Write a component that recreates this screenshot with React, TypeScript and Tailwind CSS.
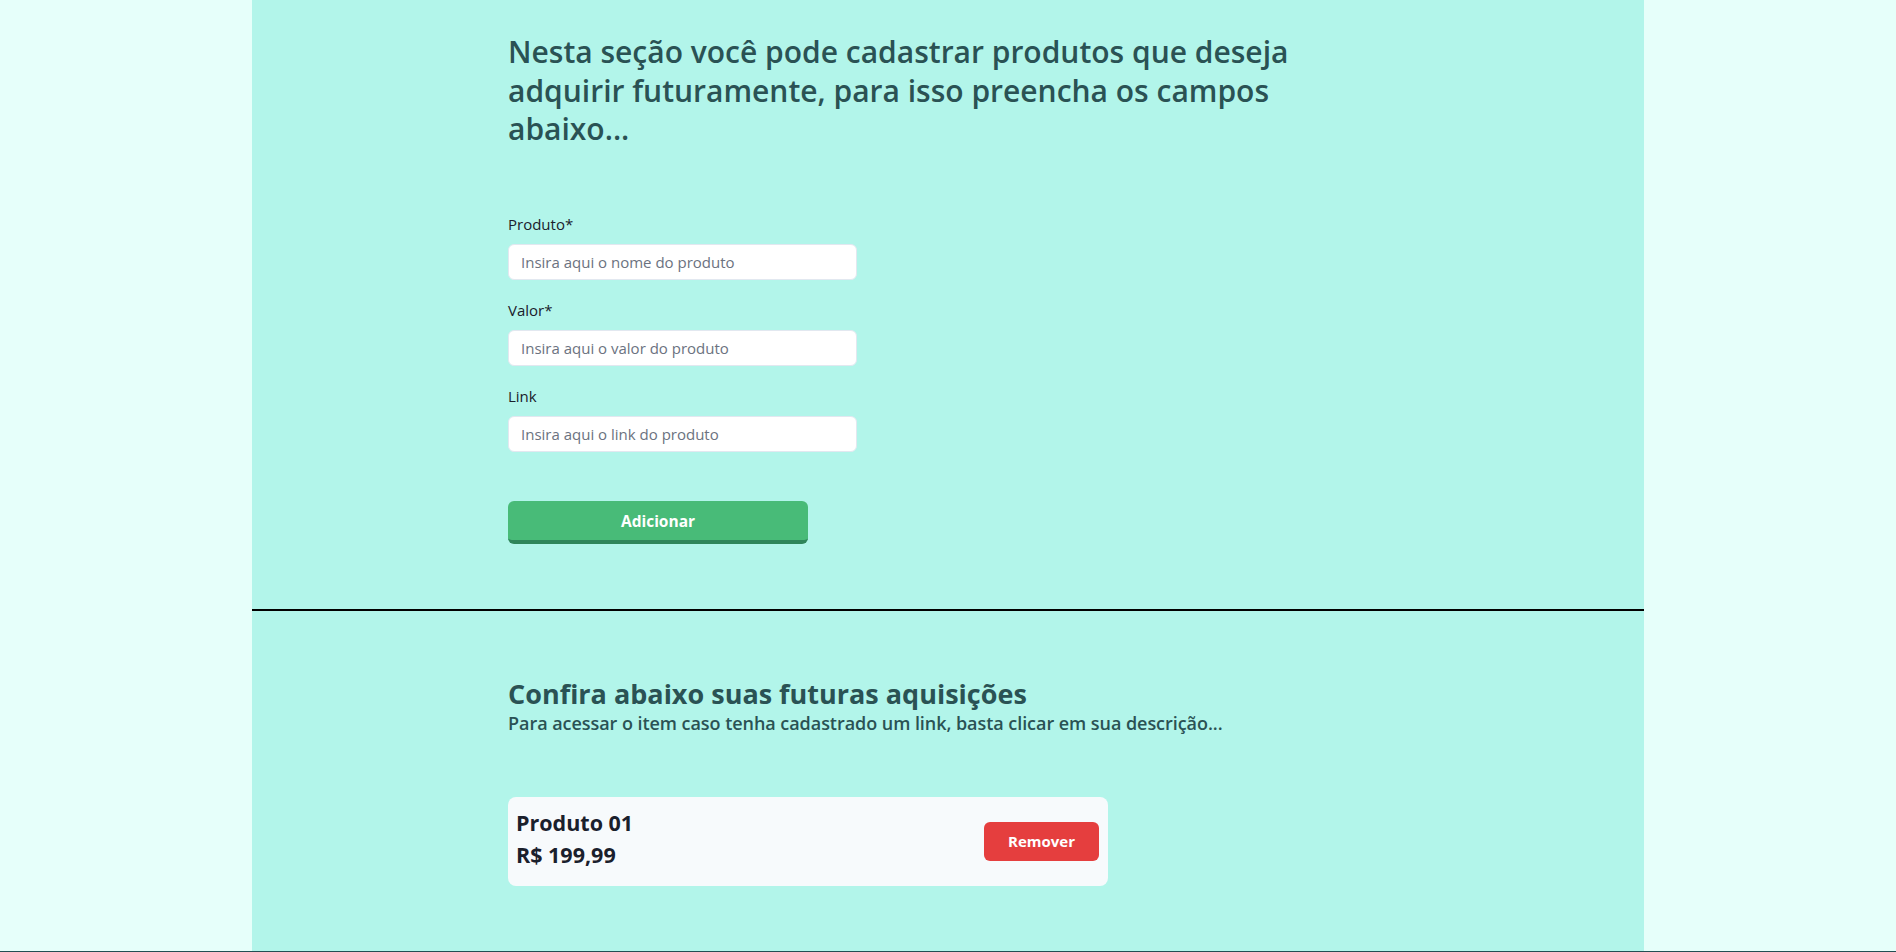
import React from 'react';

const font = { fontFamily: '"Open Sans", "Noto Sans", sans-serif' };

const Field: React.FC<{ label: string; placeholder: string }> = ({ label, placeholder }) => {
  return (
    <div className="flex flex-col">
      <label className="text-[15px] leading-6 text-[#1A202C] mb-2">{label}</label>
      <input
        className="w-[349px] h-[36px] rounded-md bg-white border border-[#E2E8F0] px-3 text-[15px] text-[#1A202C] placeholder:text-[#6b7280] outline-none"
        placeholder={placeholder}
      />
    </div>
  );
};

export default function App() {
  return (
    <div className="min-h-screen bg-[#E6FFFA]" style={font}>
      <div className="w-[1392px] mx-auto bg-[#B2F5EA]">
        <section className="w-[880px] mx-auto pt-[33px] pb-[65px]">
          <h1 className="text-[30px] leading-[38.5px] font-semibold text-[#2A5254] w-[820px]">
            Nesta seção você pode cadastrar produtos que deseja adquirir futuramente, para isso preencha os campos abaixo...
          </h1>
          <form className="mt-[63px] flex flex-col gap-[18px]">
            <Field label="Produto*" placeholder="Insira aqui o nome do produto" />
            <Field label="Valor*" placeholder="Insira aqui o valor do produto" />
            <Field label="Link" placeholder="Insira aqui o link do produto" />
            <button
              type="button"
              className="mt-[31px] w-[300px] h-[43px] pt-[4px] rounded-md bg-[#48BB78] border-b-4 border-[#2F855A] text-white font-bold text-[15.5px]"
            >
              Adicionar
            </button>
          </form>
        </section>
        <div className="h-[2px] bg-black" />
        <section className="w-[880px] mx-auto pt-[68px] pb-[65px]">
          <h2 className="text-[27px] leading-[30px] font-bold text-[#2A5254]">
            Confira abaixo suas futuras aquisições
          </h2>
          <p className="mt-[1px] text-[18px] leading-[26px] font-semibold text-[#2A5254] tracking-[-0.05px]">
            Para acessar o item caso tenha cadastrado um link, basta clicar em sua descrição...
          </p>
          <ul className="mt-[61px]">
            <li className="w-[600px] h-[89px] bg-[#F7FAFC] rounded-lg pl-2 pr-[9px] flex items-center justify-between">
              <div className="flex flex-col pb-[4px]">
                <span className="text-[21.5px] leading-[32px] font-bold text-[#1A202C]">Produto 01</span>
                <span className="text-[21.5px] leading-[32px] font-bold text-[#1A202C]">R$ 199,99</span>
              </div>
              <button type="button" className="w-[115px] h-[39px] rounded-md bg-[#E53E3E] text-white font-bold text-[15px]">
                Remover
              </button>
            </li>
          </ul>
        </section>
      </div>
      <footer className="h-[80px] bg-[#234E52]" />
    </div>
  );
}
